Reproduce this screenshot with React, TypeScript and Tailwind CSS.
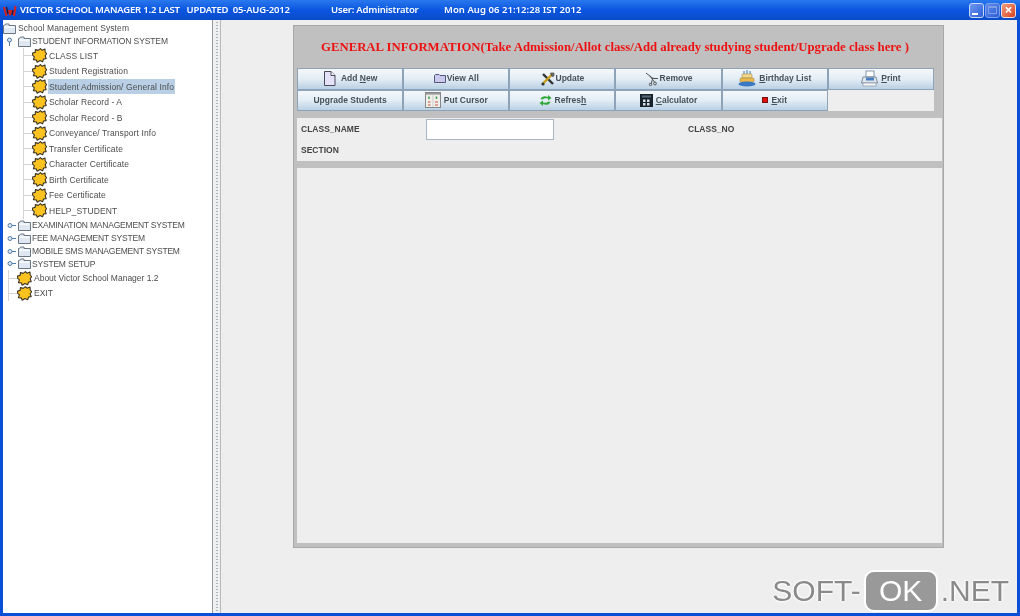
import React from "react";

const Burst = () => (
  <svg width="15" height="15" viewBox="0 0 15 15" className="shrink-0">
    <path d="M0.6 5 L3.2 4.4 L3.4 1.6 L6.2 2.4 L8.4 .6 L10 2.2 L13 1 L13.2 4 L14.6 5.6 L13.2 7.8 L14.2 10.6 L11.6 11 L10.6 13.8 L8 12.6 L5.2 14.2 L4.4 12 L1.4 11.6 L2.4 8.8 L.6 7.2 Z" fill="#fcc21f" stroke="#3a3324" strokeWidth="1.1" strokeLinejoin="round" />
  </svg>
);

const Folder = () => (
  <svg width="13" height="11" viewBox="0 0 13 11" className="shrink-0">
    <path d="M0.5 2.5 H1.5 L2.5 1 H6 V2.5 H12.5 V10.5 H0.5 Z" fill="#dfe8f2" stroke="#6a7684" strokeWidth="1" />
    <rect x="1.5" y="3.5" width="10" height="1.2" fill="#fff" />
  </svg>
);

const Handle = ({ open }: { open?: boolean }) => (
  <svg width="9" height="9" viewBox="0 0 9 9" className="shrink-0">
    {open ? (
      <>
        <circle cx="4.5" cy="3" r="2" fill="#dce8f4" stroke="#4f7ba6" strokeWidth="1" />
        <path d="M4.5 5 V9" stroke="#4f7ba6" />
      </>
    ) : (
      <>
        <circle cx="3" cy="4.5" r="2" fill="#dce8f4" stroke="#4f7ba6" strokeWidth="1" />
        <path d="M5 4.5 H9" stroke="#4f7ba6" />
      </>
    )}
  </svg>
);

const children = [
  "CLASS LIST",
  "Student Registration",
  "Student Admission/ General Info",
  "Scholar Record - A",
  "Scholar Record - B",
  "Conveyance/ Transport Info",
  "Transfer Certificate",
  "Character Certificate",
  "Birth Certificate",
  "Fee Certificate",
  "HELP_STUDENT",
];

const Leaf = ({ label, selected }: { label: string; selected?: boolean }) => (
  <div className="flex h-[15.5px] items-center">
    <div className="h-px w-[8px] shrink-0 bg-[#d4d4d4]" />
    <Burst />
    <span className={`ml-[1px] flex h-[15px] items-center px-[1px] ${selected ? "bg-[#b8cfe5]" : ""}`}>{label}</span>
  </div>
);

const Branch = ({ label }: { label: string }) => (
  <div className="flex h-[12.8px] items-center pl-[4px]">
    <Handle />
    <span className="ml-[2px]"><Folder /></span>
    <span className="ml-[1px] tracking-[-0.2px]">{label}</span>
  </div>
);

const Tree = () => (
  <div className="w-[210px] shrink-0 border-r border-[#9a9a9a] bg-white pt-[2px] font-['Liberation_Sans',sans-serif] text-[8.5px] leading-none tracking-[0.1px] text-[#4d4d4d]">
    <div className="flex h-[13px] items-center">
      <Folder />
      <span className="ml-[2px]">School Management System</span>
    </div>
    <div className="flex h-[13.2px] items-center pl-[1.5px]">
      <Handle open />
      <span className="ml-[4.5px]"><Folder /></span>
      <span className="ml-[1px] tracking-[-0.1px]">STUDENT INFORMATION SYSTEM</span>
    </div>
    <div className="mb-[0.5px] ml-[20px] border-l border-[#d4d4d4]">
      {children.map((c) => (
        <Leaf key={c} label={c} selected={c.startsWith("Student Admission")} />
      ))}
    </div>
    <Branch label="EXAMINATION MANAGEMENT SYSTEM" />
    <Branch label="FEE MANAGEMENT SYSTEM" />
    <Branch label="MOBILE SMS MANAGEMENT SYSTEM" />
    <Branch label="SYSTEM SETUP" />
    <div className="ml-[5px] border-l border-[#d4d4d4] tracking-normal">
      <Leaf label="About Victor School Manager 1.2" />
      <Leaf label="EXIT" />
    </div>
  </div>
);

const NoteIcon = () => (
  <svg width="13" height="15" viewBox="0 0 13 15">
    <path d="M1.5 .5 H8 L12 4.5 V14.5 H1.5 Z" fill="#e4e2f6" stroke="#4a4a5a" />
    <path d="M8 .5 V4.5 H12" fill="#fff" stroke="#4a4a5a" />
  </svg>
);
const FolderIcon = () => (
  <svg width="12" height="9" viewBox="0 0 12 9">
    <path d="M.5 1.5 L1.5 .5 H5 L6 1.5 H11.5 V8.5 H.5 Z" fill="#c9c9ee" stroke="#55557a" />
  </svg>
);
const ToolsIcon = () => (
  <svg width="14" height="14" viewBox="0 0 14 14">
    <path d="M2 2 L12 12" stroke="#333" strokeWidth="2.4" />
    <path d="M12 1.5 L2 11.5" stroke="#c8a020" strokeWidth="2.4" />
    <path d="M9.5 1 L13 1 L13 4 L11 4.5 Z" fill="#777" stroke="#333" strokeWidth=".6" />
    <circle cx="2" cy="12" r="1.6" fill="#333" />
  </svg>
);
const ScissorsIcon = () => (
  <svg width="14" height="14" viewBox="0 0 14 14" fill="none" stroke="#555" strokeWidth="1">
    <path d="M1 1 L8 6.5 L13 6.5" />
    <path d="M8 5.5 L6 12" />
    <circle cx="10" cy="11.5" r="1.4" />
    <circle cx="5.5" cy="12.5" r="1.2" />
    <path d="M4.5 3.5 L9.5 10" />
  </svg>
);
const CakeIcon = () => (
  <svg width="18" height="17" viewBox="0 0 18 17">
    <path d="M6 1 V5 M9 0 V5 M12 1 V5" stroke="#3c78c0" strokeWidth="1" />
    <rect x="4" y="4" width="10" height="4" rx="1" fill="#f2d890" stroke="#a88a3a" strokeWidth=".6" />
    <rect x="2" y="8" width="14" height="4" rx="1" fill="#e9b950" stroke="#a88a3a" strokeWidth=".6" />
    <ellipse cx="9" cy="14" rx="8.5" ry="2.4" fill="#3a78c4" />
  </svg>
);
const PrintIcon = () => (
  <svg width="17" height="17" viewBox="0 0 17 17">
    <rect x="5" y="1" width="8" height="6" fill="#fff" stroke="#8a97a8" />
    <path d="M2 7 H15 L16.5 13 H.5 Z" fill="#dfe6ee" stroke="#6a7684" strokeWidth=".8" />
    <rect x="5" y="7.5" width="8" height="3" fill="#4a7cc0" />
    <rect x="2" y="13" width="13" height="3" fill="#f4f4f4" stroke="#8a97a8" strokeWidth=".7" />
  </svg>
);
const TableIcon = () => (
  <svg width="16" height="16" viewBox="0 0 16 16">
    <rect x=".5" y=".5" width="15" height="15" fill="#eeeeea" stroke="#888" />
    <rect x="1" y="1" width="14" height="1.6" fill="#999" />
    <path d="M4 4.5 V7 M11.5 4.5 V7" stroke="#3a9a4a" strokeWidth="1.4" />
    <path d="M3 10 H5.5 M10 10 H13 M10 13 H13 M3 13 H5.5" stroke="#d0503a" strokeWidth="1.2" />
    <path d="M8 3 V15" stroke="#bbb" strokeWidth=".6" />
  </svg>
);
const RefreshIcon = () => (
  <svg width="13" height="13" viewBox="0 0 13 13">
    <path d="M1.5 5 C3 2 6 1.5 9 3 L9 1 L12.5 4 L9 6.5 L9 4.6 C7 3.8 5 4.2 3.5 5.5 Z" fill="#2fa93a" />
    <path d="M11.5 8 C10 11 7 11.5 4 10 L4 12 L.5 9 L4 6.5 L4 8.4 C6 9.2 8 8.8 9.5 7.5 Z" fill="#2fa93a" />
  </svg>
);
const CalcIcon = () => (
  <svg width="13" height="13" viewBox="0 0 13 13">
    <rect width="13" height="13" fill="#16222c" />
    <rect x="2" y="1.5" width="9" height="2" fill="#5a6a78" />
    <path d="M3 5.5 h2.5 v2.5 h-2.5z M7 5.5 h2.5 v2.5 h-2.5z M3 9 h2.5 v2.5 h-2.5z M7 9 h2.5 v2.5 h-2.5z" fill="#d8dde2" />
  </svg>
);
const StopIcon = () => (
  <div className="h-[6px] w-[6px] border border-[#7a1010] bg-[#e01010]" />
);

const Btn = ({ icon, label, ul, gap = "gap-[3px]" }: { icon?: React.ReactNode; label: string; ul?: number; gap?: string }) => (
  <div className={`flex h-full items-center justify-center border border-[#8fa3b8] bg-gradient-to-b from-[#f4f8fb] via-[#e3edf5] to-[#b9d0e4] ${gap}`}>
    {icon}
    <span>
      {ul === undefined ? (
        label
      ) : (
        <>
          {label.slice(0, ul)}
          <span className="underline">{label[ul]}</span>
          {label.slice(ul + 1)}
        </>
      )}
    </span>
  </div>
);

const MainPanel = () => (
  <div className="flex h-[523px] w-[651px] flex-col border border-[#a8a8a8] bg-[#c0c0c0] pl-[3px] font-['Liberation_Sans',sans-serif]">
    <div className="flex h-[42px] items-center pt-[2px] pl-[24px] font-['Liberation_Serif',serif] text-[12.75px] font-bold whitespace-pre text-[#ee1111]">
      GENERAL INFORMATION(Take Admission/Allot class/Add already studying student/Upgrade class here )
    </div>
    <div className="grid h-[43px] w-[637px] grid-cols-6 grid-rows-2 text-[8.5px] font-bold text-[#46505a]">
      <Btn icon={<NoteIcon />} label="Add New" ul={4} gap="gap-[5px]" />
      <Btn icon={<FolderIcon />} label="View All" gap="gap-[1px]" />
      <Btn icon={<ToolsIcon />} label="Update" gap="gap-[1px]" />
      <Btn icon={<ScissorsIcon />} label="Remove" gap="gap-[1px]" />
      <Btn icon={<CakeIcon />} label="Birthday List" ul={0} />
      <Btn icon={<PrintIcon />} label="Print" ul={0} />
      <Btn label="Upgrade Students" />
      <Btn icon={<TableIcon />} label="Put Cursor" />
      <Btn icon={<RefreshIcon />} label="Refresh" ul={6} />
      <Btn icon={<CalcIcon />} label="Calculator" ul={0} />
      <Btn icon={<StopIcon />} label="Exit" ul={0} />
      <div className="bg-[#eeeeee]" />
    </div>
    <div className="mt-[7px] h-[43px] w-[645px] bg-[#eeeeee] pt-px pl-[4px] text-[8.5px] font-bold text-[#444444]">
      <div className="grid grid-cols-[125px_128px_134px_1fr] grid-rows-[21px_21px] items-center">
        <span>CLASS_NAME</span>
        <div className="h-[21px] border border-[#a9b6c4] bg-white" />
        <span />
        <span>CLASS_NO</span>
        <span>SECTION</span>
      </div>
    </div>
    <div className="mt-[7px] h-[375px] w-[645px] bg-[#eeeeee]" />
  </div>
);

const Watermark = () => (
  <div className="absolute right-[11px] bottom-[4px] flex items-center font-['Liberation_Sans',sans-serif] text-[30px] leading-none text-[#8a8a8a] [text-shadow:0_0_2px_#fff,0_0_2px_#fff,0_0_3px_#fff,0_0_3px_#fff]">
    <span>SOFT-</span>
    <span className="mx-[3px] flex h-[42px] w-[74px] items-center justify-center rounded-[10px] border-2 border-white bg-[#999999] text-white [text-shadow:none]">OK</span>
    <span>.NET</span>
  </div>
);

export default function App() {
  return (
    <div className="relative flex h-[616px] w-[1020px] flex-col overflow-hidden bg-[#0a4fd8] blur-[0.4px]">
      <div className="flex h-[20px] shrink-0 items-center bg-gradient-to-b from-[#2a78ee] via-[#0a55e0] to-[#0a4cc8] font-['Noto_Sans',sans-serif] text-[9.5px] font-semibold whitespace-pre text-white">
        <svg width="14" height="13" viewBox="0 0 14 13" className="ml-[3px] shrink-0">
          <path d="M1 3 L3.5 12 M6 6 L7 11 L8.5 6 M12.5 2 L11 12" stroke="#d8201a" strokeWidth="2" fill="none" />
          <path d="M3.5 3 L5 10 M10 6 L9 11" stroke="#2a1020" strokeWidth="1.2" fill="none" />
        </svg>
        <span className="ml-[3px] w-[311px] tracking-[-0.2px]">VICTOR SCHOOL MANAGER 1.2 LAST   UPDATED  05-AUG-2012</span>
        <span className="w-[113px] tracking-[-0.2px]">User: Administrator</span>
        <span className="tracking-[0.05px]">Mon Aug 06 21:12:28 IST 2012</span>
        <div className="mr-[4px] ml-auto flex gap-px">
          <div className="flex h-[15px] w-[15px] items-end rounded-[3px] border border-[#c8d8f8] bg-gradient-to-br from-[#6f97ee] to-[#2c5fd8] p-[2px]">
            <div className="h-[2px] w-[6px] bg-white" />
          </div>
          <div className="flex h-[15px] w-[15px] items-center justify-center rounded-[3px] border border-[#7f9fe6] bg-gradient-to-br from-[#5f8aea] to-[#2c5fd8]">
            <div className="h-[8px] w-[9px] border border-t-2 border-[#7f9fe6]" />
          </div>
          <div className="flex h-[15px] w-[15px] items-center justify-center rounded-[3px] border border-[#f0e0d8] bg-gradient-to-br from-[#ee9a7a] to-[#d8401a] text-[14px] leading-none font-bold text-white">
            ×
          </div>
        </div>
      </div>
      <div className="mx-[3px] mb-[3px] flex min-h-0 flex-1">
        <Tree />
        <div className="flex w-[8px] shrink-0 justify-center border-r border-[#b8b8b8] bg-[#eef0f2] pl-px">
          <div className="w-[2px] bg-[repeating-linear-gradient(to_bottom,#eef0f2_0px,#eef0f2_2px,#a8b0b8_2px,#a8b0b8_3px)]" />
        </div>
        <div className="flex-1 bg-[#eeeeee] pt-[5px] pl-[72px]">
          <MainPanel />
        </div>
      </div>
      <Watermark />
    </div>
  );
}
